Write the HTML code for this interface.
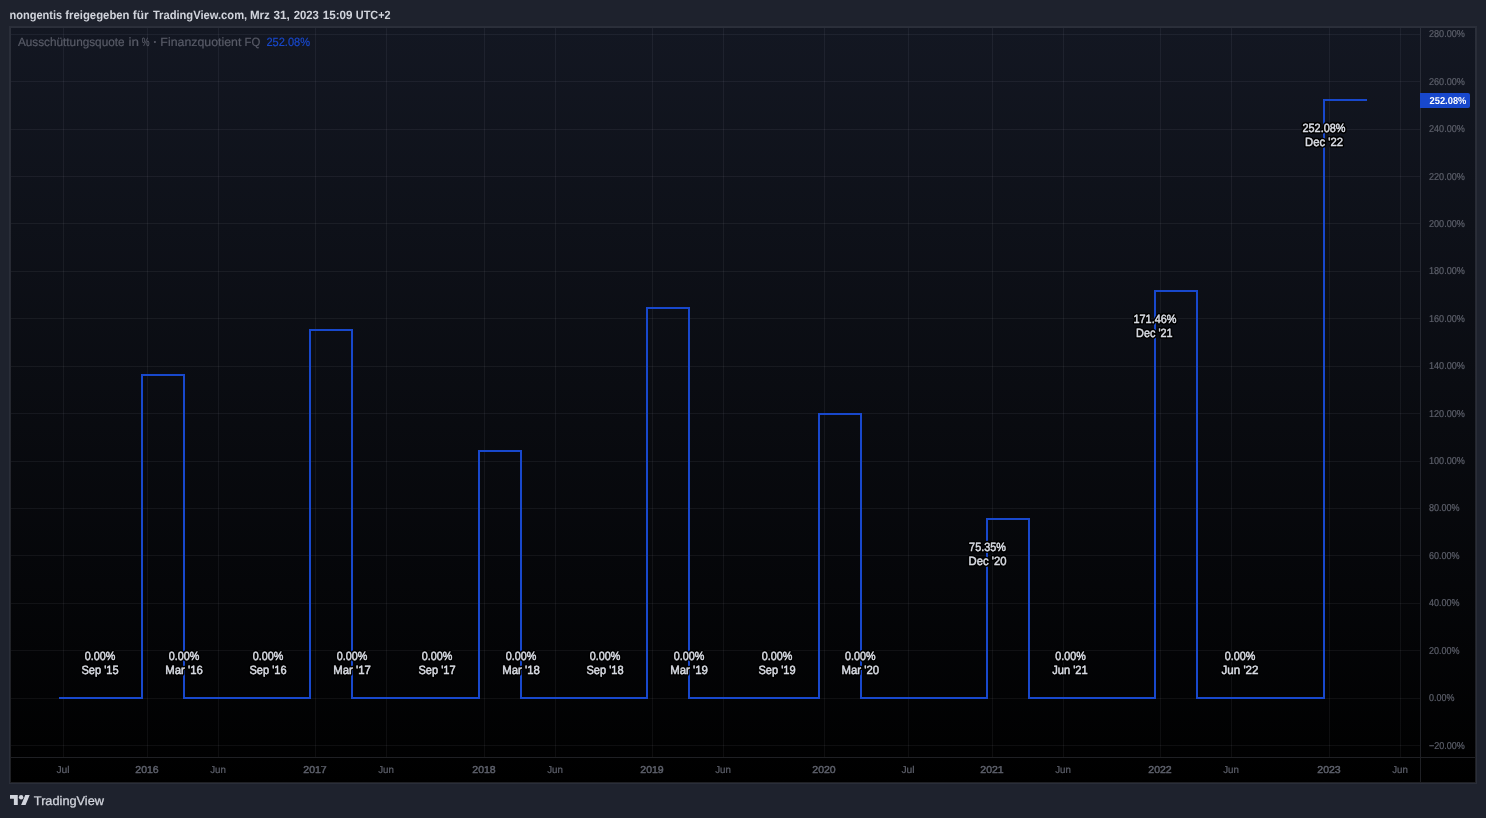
<!DOCTYPE html>
<html><head><meta charset="utf-8"><title>TradingView Chart</title>
<style>
html,body{margin:0;padding:0;background:#1e222d;}
body{width:1486px;height:818px;overflow:hidden;}
svg{display:block;will-change:transform;}
text{font-family:"Liberation Sans",sans-serif;text-rendering:geometricPrecision;}
.ax{font-size:10px;fill:#5d606b;stroke:#5d606b;stroke-width:0.2px;}
.lo{font-size:12px;fill:#000;stroke:#000;stroke-width:3.6px;stroke-linejoin:round;text-anchor:middle;}
.lb{font-size:12px;fill:#d9dce4;stroke:#d9dce4;stroke-width:0.5px;text-anchor:middle;}
</style></head><body>
<svg width="1486" height="818" viewBox="0 0 1486 818">
<defs><linearGradient id="bg" x1="0" y1="0" x2="0" y2="1"><stop offset="0" stop-color="#131722"/><stop offset="1" stop-color="#000000"/></linearGradient></defs>
<rect x="0" y="0" width="1486" height="818" fill="#1e222d"/>
<g font-size="12" font-weight="bold" fill="#d1d4dc"><text x="9.39" y="19" textLength="52.81" lengthAdjust="spacingAndGlyphs">nongentis</text><text x="65.35" y="19" textLength="64.16" lengthAdjust="spacingAndGlyphs">freigegeben</text><text x="132.85" y="19" textLength="15.92" lengthAdjust="spacingAndGlyphs">für</text><text x="152.89" y="19" textLength="94.31" lengthAdjust="spacingAndGlyphs">TradingView.com,</text><text x="249.89" y="19" textLength="19.93" lengthAdjust="spacingAndGlyphs">Mrz</text><text x="273.45" y="19" textLength="16.36" lengthAdjust="spacingAndGlyphs">31,</text><text x="293.65" y="19" textLength="25.24" lengthAdjust="spacingAndGlyphs">2023</text><text x="322.73" y="19" textLength="29.80" lengthAdjust="spacingAndGlyphs">15:09</text><text x="355.82" y="19" textLength="34.70" lengthAdjust="spacingAndGlyphs">UTC+2</text></g>
<rect x="9" y="26" width="1468" height="758" fill="#2a2e39"/>
<rect x="10" y="27" width="1466" height="756" fill="url(#bg)"/>
<g fill="rgba(90,93,102,0.35)" shape-rendering="crispEdges"><rect x="10" y="27" width="1466" height="1"/><rect x="10" y="782" width="1466" height="1"/><rect x="10" y="28" width="1" height="754"/><rect x="1475" y="28" width="1" height="754"/></g>
<g fill="rgba(240,243,250,0.06)" shape-rendering="crispEdges">
<rect x="11" y="34" width="1409" height="1"/><rect x="11" y="81" width="1409" height="1"/><rect x="11" y="129" width="1409" height="1"/><rect x="11" y="176" width="1409" height="1"/><rect x="11" y="223" width="1409" height="1"/><rect x="11" y="271" width="1409" height="1"/><rect x="11" y="318" width="1409" height="1"/><rect x="11" y="366" width="1409" height="1"/><rect x="11" y="413" width="1409" height="1"/><rect x="11" y="461" width="1409" height="1"/><rect x="11" y="508" width="1409" height="1"/><rect x="11" y="555" width="1409" height="1"/><rect x="11" y="603" width="1409" height="1"/><rect x="11" y="650" width="1409" height="1"/><rect x="11" y="698" width="1409" height="1"/><rect x="11" y="745" width="1409" height="1"/>
<rect x="63" y="28" width="1" height="729"/><rect x="147" y="28" width="1" height="729"/><rect x="218" y="28" width="1" height="729"/><rect x="315" y="28" width="1" height="729"/><rect x="386" y="28" width="1" height="729"/><rect x="484" y="28" width="1" height="729"/><rect x="555" y="28" width="1" height="729"/><rect x="652" y="28" width="1" height="729"/><rect x="723" y="28" width="1" height="729"/><rect x="824" y="28" width="1" height="729"/><rect x="908" y="28" width="1" height="729"/><rect x="992" y="28" width="1" height="729"/><rect x="1063" y="28" width="1" height="729"/><rect x="1160" y="28" width="1" height="729"/><rect x="1231" y="28" width="1" height="729"/><rect x="1329" y="28" width="1" height="729"/><rect x="1400" y="28" width="1" height="729"/>
</g>
<g fill="rgba(90,93,102,0.35)" shape-rendering="crispEdges"><rect x="1420" y="28" width="1" height="754"/><rect x="11" y="757" width="1409" height="1"/><rect x="1421" y="757" width="54" height="1"/></g>
<g class="ax">
<text x="1429" y="37" textLength="35.9" lengthAdjust="spacingAndGlyphs">280.00%</text><text x="1429" y="85" textLength="35.9" lengthAdjust="spacingAndGlyphs">260.00%</text><text x="1429" y="132" textLength="35.9" lengthAdjust="spacingAndGlyphs">240.00%</text><text x="1429" y="180" textLength="35.9" lengthAdjust="spacingAndGlyphs">220.00%</text><text x="1429" y="227" textLength="35.9" lengthAdjust="spacingAndGlyphs">200.00%</text><text x="1429" y="274" textLength="35.9" lengthAdjust="spacingAndGlyphs">180.00%</text><text x="1429" y="322" textLength="35.9" lengthAdjust="spacingAndGlyphs">160.00%</text><text x="1429" y="369" textLength="35.9" lengthAdjust="spacingAndGlyphs">140.00%</text><text x="1429" y="417" textLength="35.9" lengthAdjust="spacingAndGlyphs">120.00%</text><text x="1429" y="464" textLength="35.9" lengthAdjust="spacingAndGlyphs">100.00%</text><text x="1429" y="511" textLength="30.6" lengthAdjust="spacingAndGlyphs">80.00%</text><text x="1429" y="559" textLength="30.6" lengthAdjust="spacingAndGlyphs">60.00%</text><text x="1429" y="606" textLength="30.6" lengthAdjust="spacingAndGlyphs">40.00%</text><text x="1429" y="654" textLength="30.6" lengthAdjust="spacingAndGlyphs">20.00%</text><text x="1429" y="701" textLength="25.4" lengthAdjust="spacingAndGlyphs">0.00%</text><text x="1429" y="749" textLength="35.9" lengthAdjust="spacingAndGlyphs">−20.00%</text>
</g>
<g class="ax" text-anchor="middle">
<text x="63.0" y="773" textLength="13.2" lengthAdjust="spacingAndGlyphs">Jul</text><text x="147.0" y="773" stroke-width="0.45" textLength="23.4" lengthAdjust="spacingAndGlyphs">2016</text><text x="218.0" y="773" textLength="15.7" lengthAdjust="spacingAndGlyphs">Jun</text><text x="315.0" y="773" stroke-width="0.45" textLength="23.4" lengthAdjust="spacingAndGlyphs">2017</text><text x="386.0" y="773" textLength="15.7" lengthAdjust="spacingAndGlyphs">Jun</text><text x="484.0" y="773" stroke-width="0.45" textLength="23.4" lengthAdjust="spacingAndGlyphs">2018</text><text x="555.0" y="773" textLength="15.7" lengthAdjust="spacingAndGlyphs">Jun</text><text x="652.0" y="773" stroke-width="0.45" textLength="23.4" lengthAdjust="spacingAndGlyphs">2019</text><text x="723.0" y="773" textLength="15.7" lengthAdjust="spacingAndGlyphs">Jun</text><text x="824.0" y="773" stroke-width="0.45" textLength="23.4" lengthAdjust="spacingAndGlyphs">2020</text><text x="908.0" y="773" textLength="13.2" lengthAdjust="spacingAndGlyphs">Jul</text><text x="992.0" y="773" stroke-width="0.45" textLength="23.4" lengthAdjust="spacingAndGlyphs">2021</text><text x="1063.0" y="773" textLength="15.7" lengthAdjust="spacingAndGlyphs">Jun</text><text x="1160.0" y="773" stroke-width="0.45" textLength="23.4" lengthAdjust="spacingAndGlyphs">2022</text><text x="1231.0" y="773" textLength="15.7" lengthAdjust="spacingAndGlyphs">Jun</text><text x="1329.0" y="773" stroke-width="0.45" textLength="23.4" lengthAdjust="spacingAndGlyphs">2023</text><text x="1400.0" y="773" textLength="15.7" lengthAdjust="spacingAndGlyphs">Jun</text>
</g>
<path d="M59 698 L142 698 L142 375 L184 375 L184 698 L310 698 L310 330 L352 330 L352 698 L479 698 L479 451 L521 451 L521 698 L647 698 L647 308 L689 308 L689 698 L819 698 L819 414 L861 414 L861 698 L987 698 L987 519 L1029 519 L1029 698 L1155 698 L1155 291 L1197 291 L1197 698 L1324 698 L1324 100 L1367 100" fill="none" stroke="#1848cc" stroke-width="2" stroke-linejoin="miter" shape-rendering="crispEdges"/>
<path d="M1420 93 H1468 Q1470 93 1470 95 V106 Q1470 108 1468 108 H1420 Z" fill="#1848cc"/>
<text x="1429.53" y="104" font-size="10" font-weight="bold" fill="#ffffff" textLength="36.87" lengthAdjust="spacingAndGlyphs">252.08%</text>
<g font-size="12" fill="#585b67" stroke="#585b67" stroke-width="0.2"><text x="17.90" y="45.5" textLength="106.69" lengthAdjust="spacingAndGlyphs">Ausschüttungsquote</text><text x="128.46" y="45.5" textLength="10.45" lengthAdjust="spacingAndGlyphs">in</text><text x="141.83" y="45.5" textLength="7.76" lengthAdjust="spacingAndGlyphs">%</text><text x="160.39" y="45.5" textLength="80.97" lengthAdjust="spacingAndGlyphs">Finanzquotient</text><text x="244.50" y="45.5" textLength="15.77" lengthAdjust="spacingAndGlyphs">FQ</text><circle cx="154.9" cy="42" r="1.1" stroke="none"/></g>
<text x="266.39" y="45.5" font-size="12" fill="#1848cc" stroke="#1848cc" stroke-width="0.2" textLength="43.65" lengthAdjust="spacingAndGlyphs">252.08%</text>
<g class="lo">
<text x="100.0" y="660.00" textLength="30.5" lengthAdjust="spacingAndGlyphs">0.00%</text><text x="100.0" y="674.00" textLength="37.1" lengthAdjust="spacingAndGlyphs">Sep '15</text>
<text x="184.0" y="660.00" textLength="30.5" lengthAdjust="spacingAndGlyphs">0.00%</text><text x="184.0" y="674.00" textLength="37.6" lengthAdjust="spacingAndGlyphs">Mar '16</text>
<text x="268.0" y="660.00" textLength="30.5" lengthAdjust="spacingAndGlyphs">0.00%</text><text x="268.0" y="674.00" textLength="37.1" lengthAdjust="spacingAndGlyphs">Sep '16</text>
<text x="352.0" y="660.00" textLength="30.5" lengthAdjust="spacingAndGlyphs">0.00%</text><text x="352.0" y="674.00" textLength="37.6" lengthAdjust="spacingAndGlyphs">Mar '17</text>
<text x="437.0" y="660.00" textLength="30.5" lengthAdjust="spacingAndGlyphs">0.00%</text><text x="437.0" y="674.00" textLength="37.1" lengthAdjust="spacingAndGlyphs">Sep '17</text>
<text x="521.0" y="660.00" textLength="30.5" lengthAdjust="spacingAndGlyphs">0.00%</text><text x="521.0" y="674.00" textLength="37.6" lengthAdjust="spacingAndGlyphs">Mar '18</text>
<text x="605.0" y="660.00" textLength="30.5" lengthAdjust="spacingAndGlyphs">0.00%</text><text x="605.0" y="674.00" textLength="37.1" lengthAdjust="spacingAndGlyphs">Sep '18</text>
<text x="689.0" y="660.00" textLength="30.5" lengthAdjust="spacingAndGlyphs">0.00%</text><text x="689.0" y="674.00" textLength="37.6" lengthAdjust="spacingAndGlyphs">Mar '19</text>
<text x="777.0" y="660.00" textLength="30.5" lengthAdjust="spacingAndGlyphs">0.00%</text><text x="777.0" y="674.00" textLength="37.1" lengthAdjust="spacingAndGlyphs">Sep '19</text>
<text x="860.3" y="660.00" textLength="30.5" lengthAdjust="spacingAndGlyphs">0.00%</text><text x="860.3" y="674.00" textLength="37.6" lengthAdjust="spacingAndGlyphs">Mar '20</text>
<text x="987.5" y="551.00" textLength="36.8" lengthAdjust="spacingAndGlyphs">75.35%</text><text x="987.5" y="565.00" textLength="37.9" lengthAdjust="spacingAndGlyphs">Dec '20</text>
<text x="1070.6" y="660.00" textLength="30.5" lengthAdjust="spacingAndGlyphs">0.00%</text><text x="1069.9" y="674.00" textLength="35.5" lengthAdjust="spacingAndGlyphs">Jun '21</text>
<text x="1155.0" y="323.00" textLength="43.0" lengthAdjust="spacingAndGlyphs">171.46%</text><text x="1154.3" y="337.00" textLength="36.5" lengthAdjust="spacingAndGlyphs">Dec '21</text>
<text x="1240.0" y="660.00" textLength="30.5" lengthAdjust="spacingAndGlyphs">0.00%</text><text x="1240.0" y="674.00" textLength="36.9" lengthAdjust="spacingAndGlyphs">Jun '22</text>
<text x="1324.0" y="132.00" textLength="43.0" lengthAdjust="spacingAndGlyphs">252.08%</text><text x="1324.0" y="146.00" textLength="37.9" lengthAdjust="spacingAndGlyphs">Dec '22</text>
</g>
<g class="lb">
<text x="100.0" y="660.00" textLength="30.5" lengthAdjust="spacingAndGlyphs">0.00%</text><text x="100.0" y="674.00" textLength="37.1" lengthAdjust="spacingAndGlyphs">Sep '15</text>
<text x="184.0" y="660.00" textLength="30.5" lengthAdjust="spacingAndGlyphs">0.00%</text><text x="184.0" y="674.00" textLength="37.6" lengthAdjust="spacingAndGlyphs">Mar '16</text>
<text x="268.0" y="660.00" textLength="30.5" lengthAdjust="spacingAndGlyphs">0.00%</text><text x="268.0" y="674.00" textLength="37.1" lengthAdjust="spacingAndGlyphs">Sep '16</text>
<text x="352.0" y="660.00" textLength="30.5" lengthAdjust="spacingAndGlyphs">0.00%</text><text x="352.0" y="674.00" textLength="37.6" lengthAdjust="spacingAndGlyphs">Mar '17</text>
<text x="437.0" y="660.00" textLength="30.5" lengthAdjust="spacingAndGlyphs">0.00%</text><text x="437.0" y="674.00" textLength="37.1" lengthAdjust="spacingAndGlyphs">Sep '17</text>
<text x="521.0" y="660.00" textLength="30.5" lengthAdjust="spacingAndGlyphs">0.00%</text><text x="521.0" y="674.00" textLength="37.6" lengthAdjust="spacingAndGlyphs">Mar '18</text>
<text x="605.0" y="660.00" textLength="30.5" lengthAdjust="spacingAndGlyphs">0.00%</text><text x="605.0" y="674.00" textLength="37.1" lengthAdjust="spacingAndGlyphs">Sep '18</text>
<text x="689.0" y="660.00" textLength="30.5" lengthAdjust="spacingAndGlyphs">0.00%</text><text x="689.0" y="674.00" textLength="37.6" lengthAdjust="spacingAndGlyphs">Mar '19</text>
<text x="777.0" y="660.00" textLength="30.5" lengthAdjust="spacingAndGlyphs">0.00%</text><text x="777.0" y="674.00" textLength="37.1" lengthAdjust="spacingAndGlyphs">Sep '19</text>
<text x="860.3" y="660.00" textLength="30.5" lengthAdjust="spacingAndGlyphs">0.00%</text><text x="860.3" y="674.00" textLength="37.6" lengthAdjust="spacingAndGlyphs">Mar '20</text>
<text x="987.5" y="551.00" textLength="36.8" lengthAdjust="spacingAndGlyphs">75.35%</text><text x="987.5" y="565.00" textLength="37.9" lengthAdjust="spacingAndGlyphs">Dec '20</text>
<text x="1070.6" y="660.00" textLength="30.5" lengthAdjust="spacingAndGlyphs">0.00%</text><text x="1069.9" y="674.00" textLength="35.5" lengthAdjust="spacingAndGlyphs">Jun '21</text>
<text x="1155.0" y="323.00" textLength="43.0" lengthAdjust="spacingAndGlyphs">171.46%</text><text x="1154.3" y="337.00" textLength="36.5" lengthAdjust="spacingAndGlyphs">Dec '21</text>
<text x="1240.0" y="660.00" textLength="30.5" lengthAdjust="spacingAndGlyphs">0.00%</text><text x="1240.0" y="674.00" textLength="36.9" lengthAdjust="spacingAndGlyphs">Jun '22</text>
<text x="1324.0" y="132.00" textLength="43.0" lengthAdjust="spacingAndGlyphs">252.08%</text><text x="1324.0" y="146.00" textLength="37.9" lengthAdjust="spacingAndGlyphs">Dec '22</text>
</g>
<g transform="translate(10,792.75) scale(0.5556)" fill="#d1d4dc"><path d="M14 22H7V11H0V4h14v18zM28 22h-8l7.5-18h8L28 22z"/><circle cx="20" cy="8" r="4"/></g>
<text x="33.82" y="805" font-size="12.5" fill="#d1d4dc" stroke="#d1d4dc" stroke-width="0.3" textLength="70.15" lengthAdjust="spacingAndGlyphs">TradingView</text>
</svg>
</body></html>
